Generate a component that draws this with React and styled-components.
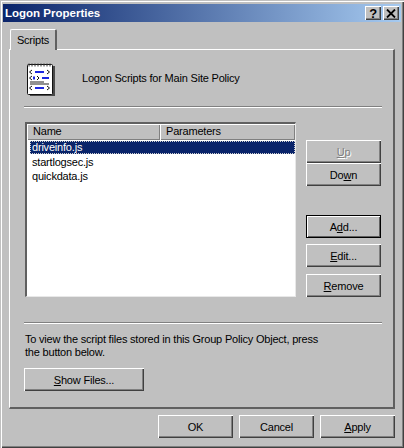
import React from "react";
import styled, { createGlobalStyle } from "styled-components";

const GlobalStyle = createGlobalStyle`
  html, body {
    margin: 0;
    padding: 0;
    background: #c0c0c0;
  }
  * {
    box-sizing: border-box;
  }
`;

function ScriptIcon() {
  return (
    <svg width="28" height="33" viewBox="0 0 28 33">
      <rect x="3" y="3" width="25" height="30" fill="#4a4a4a" />
      <rect x="0.5" y="1.5" width="25" height="30" rx="1" fill="#fff" stroke="#111" />
      <path d="M2 0.5v3M5 0.5v3M8 0.5v3M11 0.5v3M14 0.5v3M17 0.5v3M20 0.5v3M23 0.5v3" stroke="#333" />
      <path d="M5 7 2.5 9 5 11M20 7l2.5 2L20 11M5 13l-2.5 2L5 17M10 13l2 2-2 2M5 23l-2.5 2L5 27M20 23l2.5 2-2.5 2" fill="none" stroke="#111" />
      <path d="M8 9h9M15 15h7M8 25h9" stroke="#1c28e0" strokeWidth="2" />
      <path d="M6 13.5h2v3H6z" fill="#1c28e0" />
      <path d="M3 19h14M3 21h19" stroke="#222" />
    </svg>
  );
}

function Hotkey({ children }) {
  return <Underlined>{children}</Underlined>;
}

export default function App() {
  return (
    <>
      <GlobalStyle />
      <Dialog>
        <TitleBar>
          <Title>Logon Properties</Title>
          <TitleButtons>
            <TitleButton>?</TitleButton>
            <TitleButton>
              <svg width="10" height="9" viewBox="0 0 10 9">
                <path d="M1 0.5 9 8.5M9 0.5 1 8.5" stroke="#000" strokeWidth="1.8" />
              </svg>
            </TitleButton>
          </TitleButtons>
        </TitleBar>

        <TabStrip>
          <Tab>Scripts</Tab>
        </TabStrip>

        <Panel>
          <Header>
            <ScriptIcon />
            <HeaderText>Logon Scripts for Main Site Policy</HeaderText>
          </Header>
          <Divider />

          <ListArea>
            <ListBox>
              <ColumnHeaders>
                <Column $width="133px">Name</Column>
                <Column $grow>Parameters</Column>
              </ColumnHeaders>
              <ListRow $selected>driveinfo.js</ListRow>
              <ListRow>startlogsec.js</ListRow>
              <ListRow>quickdata.js</ListRow>
            </ListBox>

            <SideButtons>
              <Button $disabled>
                <Hotkey>U</Hotkey>p
              </Button>
              <Button>
                Do<Hotkey>w</Hotkey>n
              </Button>
              <Button $default $gap="29px">
                A<Hotkey>d</Hotkey>d...
              </Button>
              <Button $gap="6px">
                <Hotkey>E</Hotkey>dit...
              </Button>
              <Button $gap="7px">
                <Hotkey>R</Hotkey>emove
              </Button>
            </SideButtons>
          </ListArea>

          <LowerDivider />
          <Note>
            To view the script files stored in this Group Policy Object, press
            <br />
            the button below.
          </Note>
          <Button $wide>
            <Hotkey>S</Hotkey>how Files...
          </Button>
        </Panel>

        <Footer>
          <Button>OK</Button>
          <Button>Cancel</Button>
          <Button>
            <Hotkey>A</Hotkey>pply
          </Button>
        </Footer>
      </Dialog>
    </>
  );
}

const Dialog = styled.div`
  width: 404px;
  height: 448px;
  padding: 4px 3px 4px 3px;
  background: #c0c0c0;
  font-family: "Liberation Sans", Arial, sans-serif;
  font-size: 11px;
  letter-spacing: -0.2px;
  color: #000;
  box-shadow: inset 1px 1px 0 #c0c0c0, inset 2px 2px 0 #fff,
    inset -1px -1px 0 #404040, inset -2px -2px 0 #808080;
  overflow: hidden;
`;

const TitleBar = styled.div`
  height: 18px;
  display: flex;
  align-items: center;
  justify-content: space-between;
  padding: 0 2px;
  background: linear-gradient(90deg, #0a246a 0%, #a6caf0 100%);
`;

const Title = styled.span`
  color: #fff;
  font-weight: 700;
  font-size: 11.5px;
  letter-spacing: 0;
`;

const TitleButtons = styled.div`
  display: flex;
  gap: 2px;
`;

const TitleButton = styled.div`
  width: 16px;
  height: 14px;
  display: flex;
  align-items: center;
  justify-content: center;
  font-weight: 700;
  font-size: 13px;
  background: #c0c0c0;
  box-shadow: inset 1px 1px 0 #fff, inset -1px -1px 0 #404040,
    inset -2px -2px 0 #808080;
`;

const TabStrip = styled.div`
  display: flex;
  height: 27px;
  padding: 7px 0 0 7px;
`;

const Tab = styled.div`
  width: 47px;
  height: 21px;
  padding-top: 4px;
  text-align: center;
  background: #c0c0c0;
  border-top: 1px solid #fff;
  border-left: 1px solid #fff;
  border-right: 2px solid #606060;
  border-top-left-radius: 2px;
  border-top-right-radius: 2px;
  position: relative;
  z-index: 1;
`;

const Panel = styled.div`
  width: 386px;
  height: 360px;
  margin-left: 6px;
  padding: 12px 11px 0 14px;
  border-top: 1px solid #fff;
  border-left: 1px solid #fff;
  border-right: 2px solid #606060;
  border-bottom: 2px solid #606060;
`;

const Header = styled.div`
  display: flex;
  align-items: center;
  gap: 27px;
  height: 34px;
  padding-left: 3px;
`;

const HeaderText = styled.span`
  margin-top: -2px;
`;

const Divider = styled.div`
  height: 2px;
  margin-top: 10px;
  background: #808080;
  border-bottom: 1px solid #fff;
`;

const ListArea = styled.div`
  display: flex;
  align-items: flex-start;
  gap: 10px;
  margin: 14px 0 0 1px;
`;

const ListBox = styled.div`
  width: 271px;
  height: 175px;
  background: #fff;
  border-top: 2px solid #606060;
  border-left: 2px solid #606060;
  border-right: 1px solid #e8e8e8;
  border-bottom: 1px solid #e8e8e8;
`;

const ColumnHeaders = styled.div`
  display: flex;
  height: 16px;
  background: #c0c0c0;
`;

const Column = styled.div`
  width: ${(props) => props.$width || "auto"};
  flex: ${(props) => (props.$grow ? 1 : "none")};
  padding: 1px 0 0 6px;
  box-shadow: inset 1px 1px 0 #fff, inset -1px -1px 0 #808080;
`;

const ListRow = styled.div`
  height: ${(props) => (props.$selected ? "13px" : "14px")};
  margin: ${(props) => (props.$selected ? "1px 0 1px 3px" : "0 0 0 3px")};
  padding-left: 2px;
  line-height: ${(props) => (props.$selected ? "13px" : "14px")};
  color: ${(props) => (props.$selected ? "#fff" : "#000")};
  background: ${(props) => (props.$selected ? "#0a246a" : "transparent")};
  outline: ${(props) => (props.$selected ? "1px dotted #d0d0d0" : "none")};
  outline-offset: -1px;
`;

const SideButtons = styled.div`
  display: flex;
  flex-direction: column;
  margin-top: 18px;
`;

const Button = styled.div`
  width: ${(props) => (props.$wide ? "120px" : "75px")};
  height: 23px;
  display: flex;
  align-items: center;
  justify-content: center;
  flex: none;
  white-space: pre;
  margin-top: ${(props) => props.$gap || "0"};
  background: #c0c0c0;
  color: ${(props) => (props.$disabled ? "#808080" : "#000")};
  text-shadow: ${(props) => (props.$disabled ? "1px 1px 0 #fff" : "none")};
  box-shadow: ${(props) =>
    props.$default
      ? "inset 0 0 0 1px #000, inset 1px 1px 0 1px #fff, inset -1px -1px 0 1px #606060"
      : "inset 1px 1px 0 #fff, inset -1px -1px 0 #404040, inset -2px -2px 0 #808080"};
`;

const Underlined = styled.span`
  text-decoration: underline;
`;

const LowerDivider = styled(Divider)`
  margin-top: 25px;
`;

const Note = styled.p`
  margin: 9px 0 9px 1px;
  line-height: 13px;
`;

const Footer = styled.div`
  display: flex;
  justify-content: flex-end;
  gap: 6px;
  margin-top: 6px;
  padding-right: 6px;
`;
